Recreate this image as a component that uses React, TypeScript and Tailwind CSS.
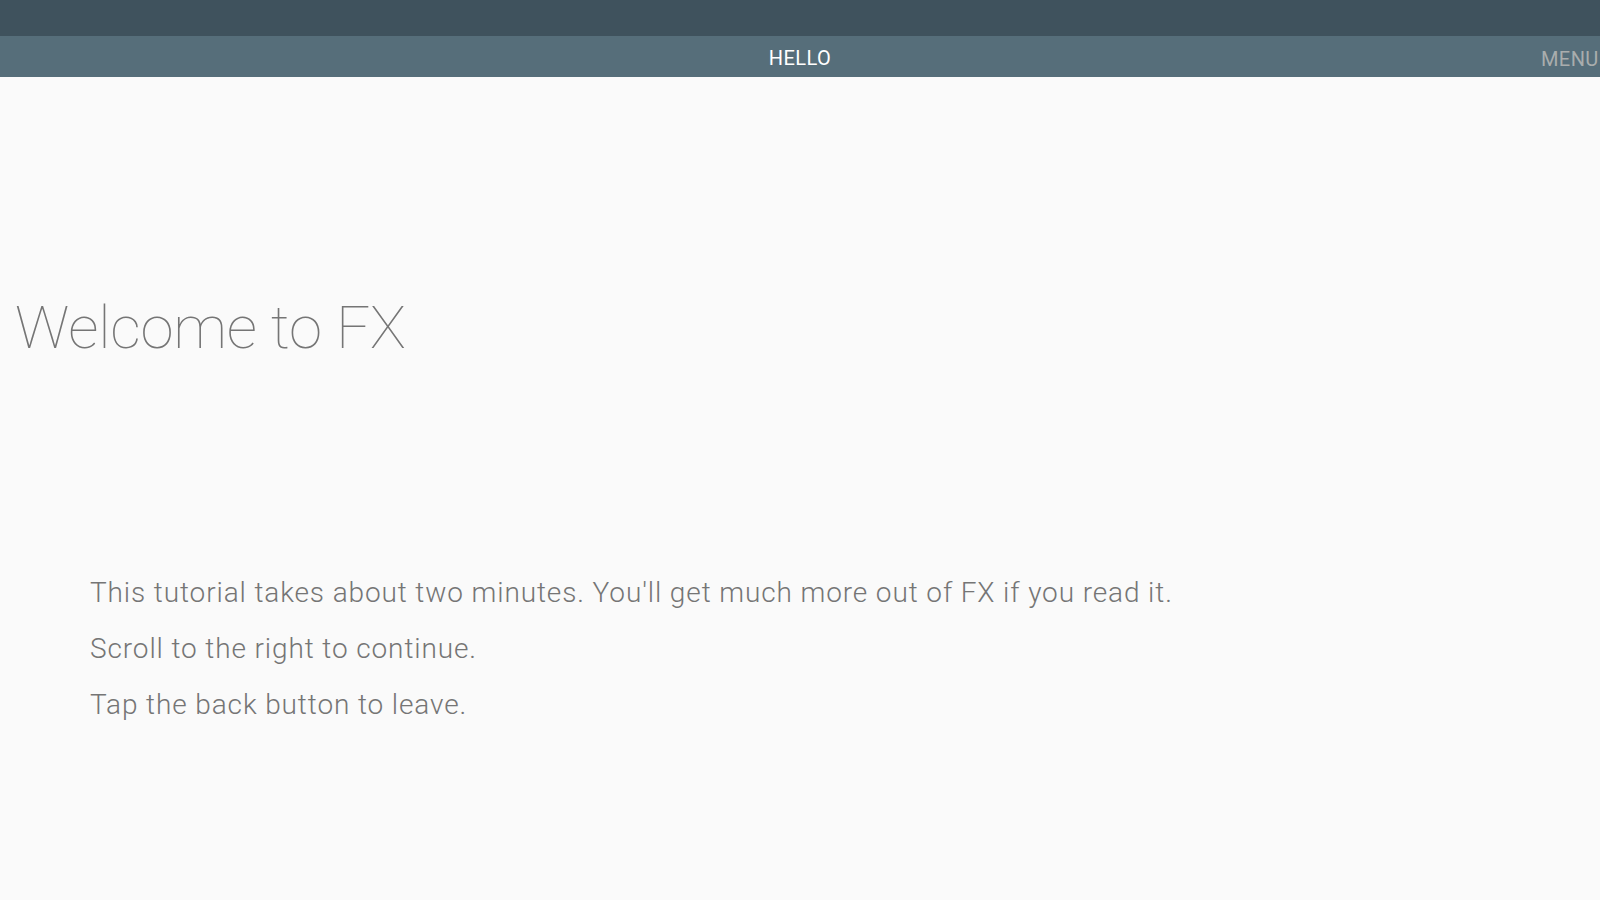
export default function App() {
  return (
    <div className="w-[1600px] h-[900px] overflow-hidden bg-[#fafafa]" style={{ fontFamily: "Roboto, 'Noto Sans', sans-serif" }}>
      <div className="h-[36px] bg-[#3f525d]" />
      <div className="h-[41px] bg-[#566e7a] relative flex items-center justify-center">
        <span className="text-[20px] leading-[41px] text-white font-normal pt-[3px] tracking-[0.4px]">HELLO</span>
        <span className="absolute left-[1541px] top-0 text-[20px] leading-[41px] text-[#a9adad] font-normal pt-[3px] tracking-[0.4px] whitespace-nowrap">MENU</span>
      </div>
      <div className="flex flex-col">
        <h1 className="mt-[215px] ml-[15px] text-[60px] leading-[72px] font-thin text-[#757575] tracking-[-0.25px]">Welcome to FX</h1>
        <div className="mt-[201px] ml-[90px] flex flex-col text-[28px] leading-[56px] font-light text-[#757575] tracking-[0.88px]">
          <p>This tutorial takes about two minutes. You'll get much more out of FX if you read it.</p>
          <p>Scroll to the right to continue.</p>
          <p>Tap the back button to leave.</p>
        </div>
      </div>
    </div>
  );
}
